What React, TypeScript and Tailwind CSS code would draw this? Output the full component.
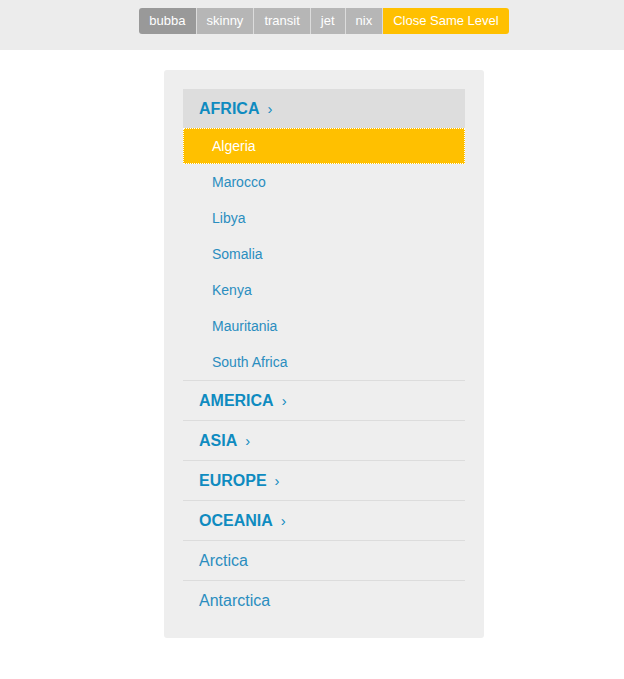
const buttons = ["bubba", "skinny", "transit", "jet", "nix"];

const regions = [
  {
    name: "AFRICA",
    open: true,
    items: ["Algeria", "Marocco", "Libya", "Somalia", "Kenya", "Mauritania", "South Africa"],
  },
  { name: "AMERICA", items: ["x"] },
  { name: "ASIA", items: ["x"] },
  { name: "EUROPE", items: ["x"] },
  { name: "OCEANIA", items: ["x"] },
  { name: "Arctica", items: [] },
  { name: "Antarctica", items: [] },
];

const App = () => {
  return (
    <div className="min-h-[679px] bg-white font-['Liberation_Sans',Arial,sans-serif]">
      {/* Theme switcher */}
      <div className="h-[50px] bg-[#ececec] pt-2 pl-6 flex justify-center">
        <div className="flex h-[26px] rounded-[3px] overflow-hidden text-[13px] text-white">
          {buttons.map((label, i) => (
            <span
              key={label}
              className={
                i === 0
                  ? "px-[10px] flex items-center bg-[#999999]"
                  : "px-[10px] flex items-center bg-[#b6b6b6] border-l border-[#dcdcdc]"
              }
            >
              {label}
            </span>
          ))}
          <span className="px-[10px] flex items-center bg-[#ffc000] border-l border-[#dcdcdc]">
            Close Same Level
          </span>
        </div>
      </div>

      {/* Accordion */}
      <div className="pl-6">
        <div className="w-[320px] mx-auto mt-5 bg-[#eeeeee] rounded-[3px] p-[19px] pb-[18px]">
          <ul>
            {regions.map((region, i) => (
              <li key={region.name} className={i > 0 ? "border-t border-[#dcdcdc]" : ""}>
                {region.items.length > 0 ? (
                  <div
                    className={
                      region.open
                        ? "h-[39px] pl-4 flex items-center bg-[#dddddd] text-[16px] font-bold text-[#0f8bc0]"
                        : "h-[39px] pl-4 flex items-center text-[16px] font-bold text-[#0f8bc0]"
                    }
                  >
                    {region.name}
                    <span className="ml-2 text-[15px] font-normal leading-none">›</span>
                  </div>
                ) : (
                  <div className="h-[39px] pl-4 flex items-center text-[16px] text-[#2a8dbf]">
                    {region.name}
                  </div>
                )}
                {region.open && (
                  <ul>
                    {region.items.map((item, j) => (
                      <li
                        key={item}
                        className={
                          j === 0
                            ? "h-9 pl-[29px] flex items-center text-[14px] text-white bg-[#ffc000] outline-1 outline-dotted outline-white -outline-offset-1"
                            : "h-9 pl-[29px] flex items-center text-[14px] text-[#2a8dbf]"
                        }
                      >
                        {item}
                      </li>
                    ))}
                  </ul>
                )}
              </li>
            ))}
          </ul>
        </div>
      </div>
    </div>
  );
};

export default App;
